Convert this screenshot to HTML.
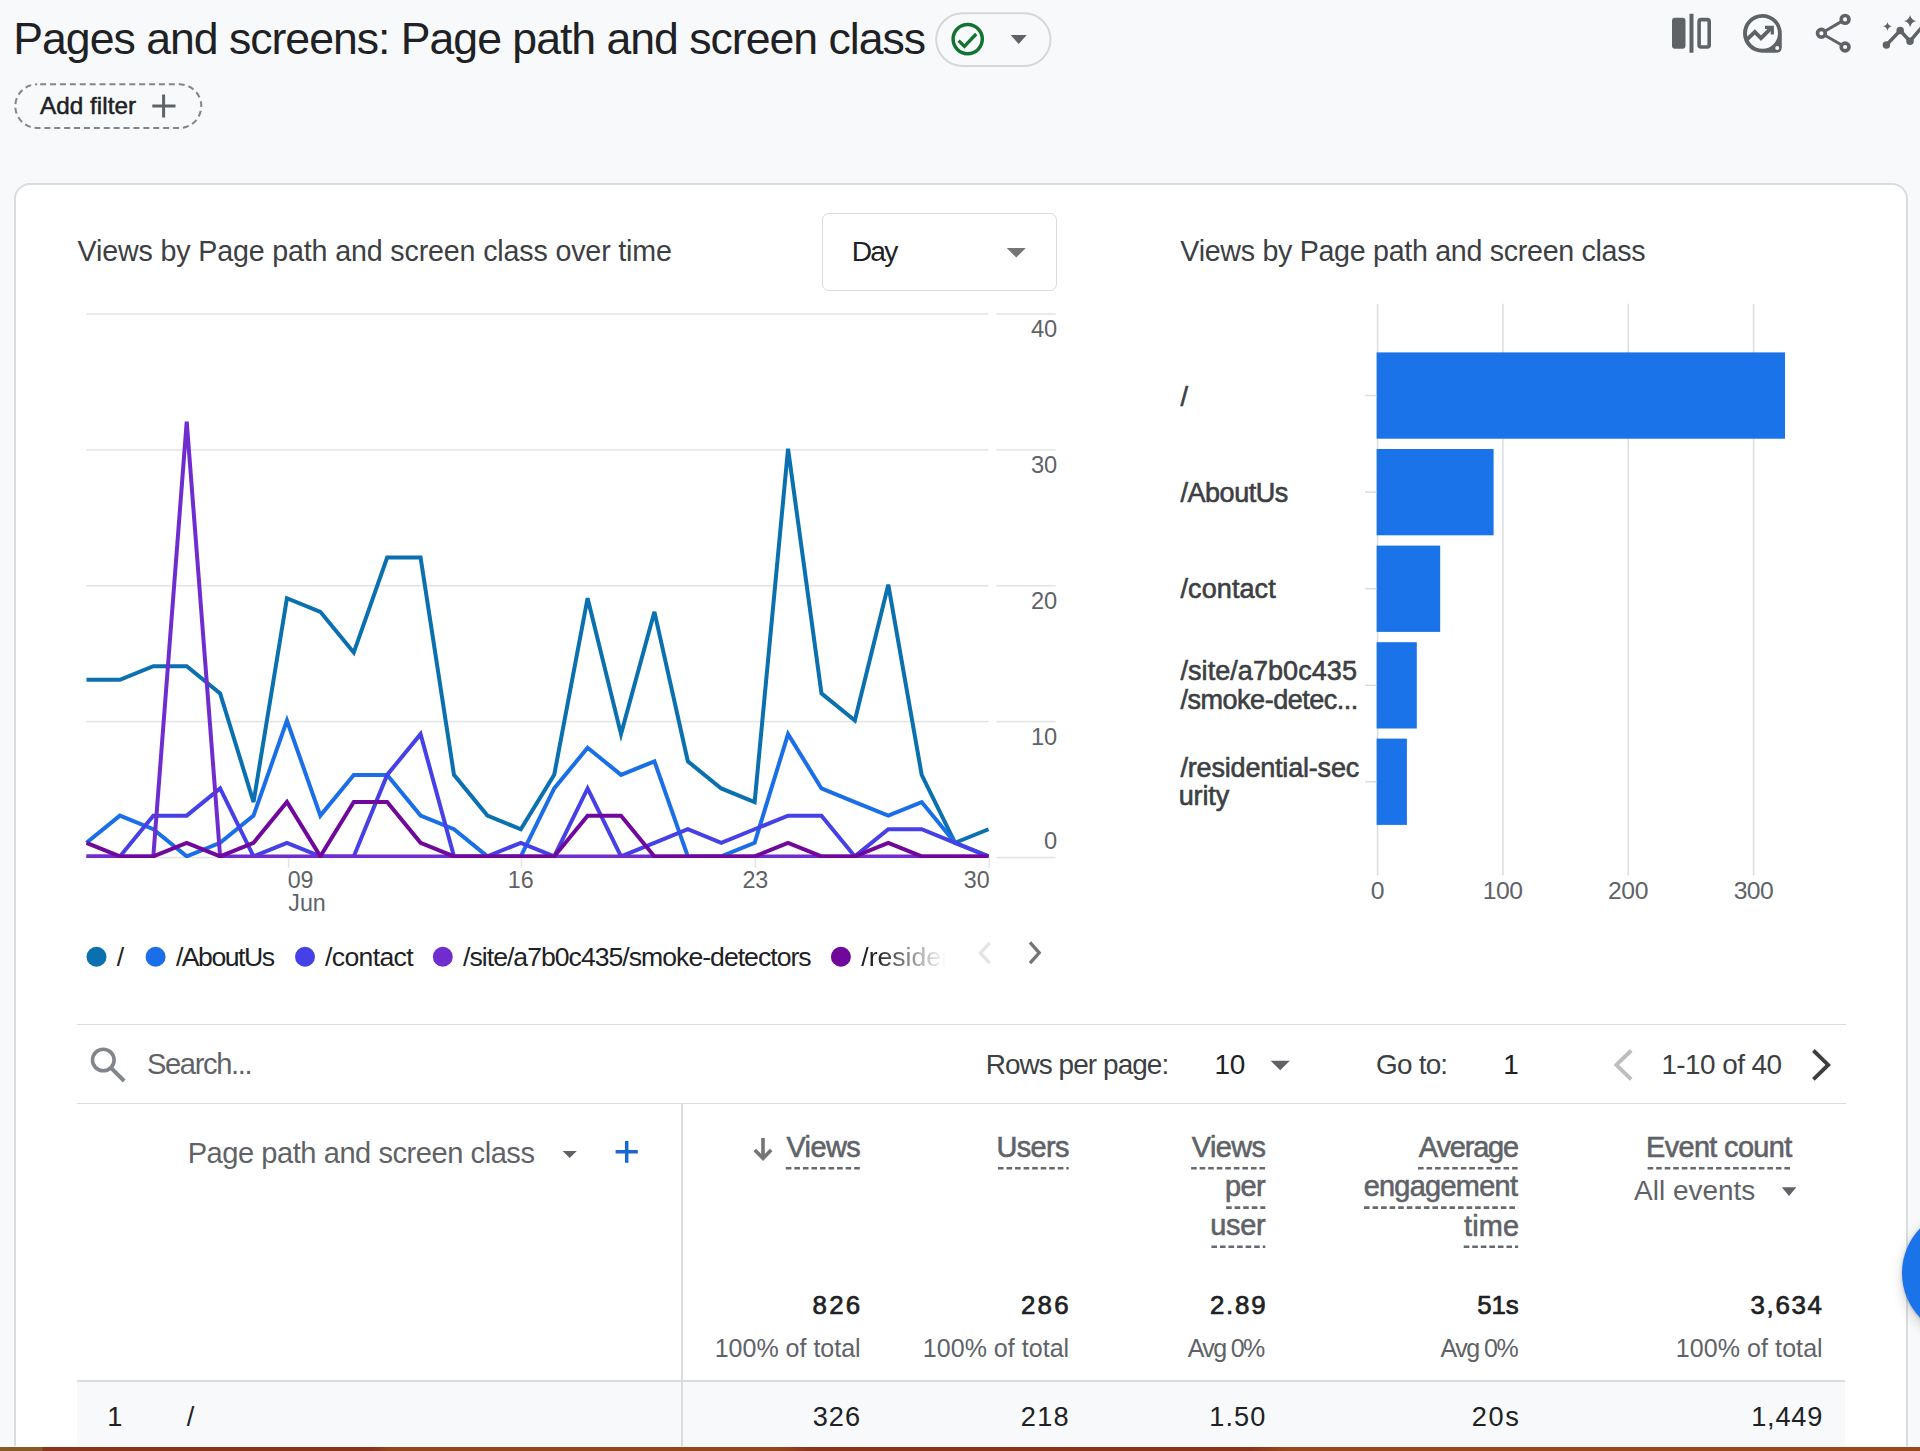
<!DOCTYPE html>
<html><head><meta charset="utf-8"><style>
html,body{margin:0;padding:0;}
body{width:1920px;height:1451px;background:#f8f9fa;position:relative;overflow:hidden;font-family:"Liberation Sans",sans-serif;}
.t{position:absolute;white-space:nowrap;}
</style></head><body>
<div class="t " style="top:14px;font-size:44.62px;line-height:49px;color:#202124;letter-spacing:-1.011px;left:13.33px;">Pages and screens: Page path and screen class</div>
<svg style="position:absolute;left:900px;top:0" width="200" height="80" viewBox="900 0 200 80"><rect x="936.2" y="13.3" width="114.3" height="52.6" rx="26.3" fill="none" stroke="#d5d7da" stroke-width="2"/></svg>
<svg style="position:absolute;left:0;top:0" width="1920" height="200"><circle cx="967.7" cy="39.1" r="14.6" fill="none" stroke="#137333" stroke-width="3.5"/><path d="M958.6 40.6 L964.4 46.4 L976.2 34" fill="none" stroke="#137333" stroke-width="3.3"/><path d="M1010.7 35 L1026.7 35 L1018.7 44 Z" fill="#5f6368"/><path d="M163.6 94.5 V117.5 M152.3 106 H175.5" stroke="#5f6368" stroke-width="3"/></svg>
<svg style="position:absolute;left:0;top:70px" width="230" height="70" viewBox="0 70 230 70"><rect x="15.3" y="84.3" width="186" height="43.7" rx="21.85" fill="none" stroke="#80868b" stroke-width="2" stroke-dasharray="6 3.9" stroke-dashoffset="-3"/></svg>
<div class="t " style="top:92px;font-size:24.27px;line-height:27px;color:#202124;-webkit-text-stroke:0.5px #202124;letter-spacing:0.034px;left:40.00px;">Add filter</div>
<svg style="position:absolute;left:1650px;top:0" width="270" height="70" viewBox="1650 0 270 70"><rect x="1672" y="17.8" width="13.5" height="31" rx="3" fill="#5f6368"/><rect x="1689.5" y="13.75" width="4" height="39" fill="#5f6368"/><rect x="1699.1" y="19.6" width="10.1" height="27.4" rx="2" fill="none" stroke="#5f6368" stroke-width="3.6"/><path d="M1781.8 33.3 V47 Q1781.8 52.8 1776 52.8 H1762.5 A19.4 19.4 0 1 1 1781.8 33.3 Z M1762.5 17.8 A15.5 15.5 0 1 0 1778 33.3 A15.5 15.5 0 0 0 1762.5 17.8 Z" fill="#5f6368" fill-rule="evenodd"/><circle cx="1777.2" cy="48" r="2" fill="#f8f9fa"/><path d="M1747.1 39.3 L1754.8 32 L1761 38.2 L1771.6 27.6" fill="none" stroke="#5f6368" stroke-width="3.8"/><path d="M1765 27.3 H1772.3 V34.5" fill="none" stroke="#5f6368" stroke-width="3.2"/><g fill="none" stroke="#5f6368" stroke-width="3.6"><circle cx="1845.1" cy="19.4" r="3.9"/><circle cx="1821.4" cy="33.3" r="3.9"/><circle cx="1845.1" cy="47" r="3.9"/></g><path d="M1824.8 31.3 L1841.7 21.4 M1824.8 35.3 L1841.7 45" stroke="#5f6368" stroke-width="3"/><path d="M1887.5 21.9 Q1888.29 25.51 1891.9 26.3 Q1888.29 27.09 1887.5 30.700000000000003 Q1886.71 27.09 1883.1 26.3 Q1886.71 25.51 1887.5 21.9Z" fill="#5f6368"/><path d="M1910.1 14.900000000000002 Q1911.22 19.98 1916.3 21.1 Q1911.22 22.22 1910.1 27.3 Q1908.98 22.22 1903.8999999999999 21.1 Q1908.98 19.98 1910.1 14.900000000000002Z" fill="#5f6368"/><path d="M1886.4 45 L1900.2 30.6 L1910 41.25 L1922 27" fill="none" stroke="#5f6368" stroke-width="3.5"/><circle cx="1886.4" cy="45" r="3.75" fill="#5f6368"/><circle cx="1900.2" cy="30.6" r="3.75" fill="#5f6368"/><circle cx="1910" cy="41.25" r="3.75" fill="#5f6368"/></svg>
<div style="position:absolute;left:13.5px;top:183.2px;width:1894px;height:1400px;background:#fff;border:2px solid #dadce0;border-radius:16px;box-sizing:border-box"></div>
<div class="t " style="top:235px;font-size:28.63px;line-height:32px;color:#3c4043;letter-spacing:-0.148px;left:77.56px;">Views by Page path and screen class over time</div>
<div class="t " style="top:235px;font-size:28.63px;line-height:32px;color:#3c4043;letter-spacing:-0.295px;left:1180.36px;">Views by Page path and screen class</div>
<div style="position:absolute;left:821.5px;top:212.5px;width:235px;height:78px;border:1.5px solid #dadce0;border-radius:7px;box-sizing:border-box"></div>
<div class="t " style="top:235px;font-size:28.20px;line-height:32px;color:#202124;letter-spacing:-1.818px;left:851.74px;">Day</div>
<svg style="position:absolute;left:0;top:0" width="1100" height="300"><path d="M1006.7 247.9 H1025.8 L1016.25 257.6Z" fill="#757575"/></svg>
<svg style="position:absolute;left:0;top:0" width="1100" height="1000"><defs><clipPath id="cc"><rect x="60" y="300" width="940" height="558"/></clipPath></defs><rect x="86.5" y="313.25" width="902" height="1.5" fill="#e3e3e3"/><rect x="996.4" y="313.25" width="59.2" height="1.5" fill="#e3e3e3"/><rect x="86.5" y="449.15" width="902" height="1.5" fill="#e3e3e3"/><rect x="996.4" y="449.15" width="59.2" height="1.5" fill="#e3e3e3"/><rect x="86.5" y="585.00" width="902" height="1.5" fill="#e3e3e3"/><rect x="996.4" y="585.00" width="59.2" height="1.5" fill="#e3e3e3"/><rect x="86.5" y="720.85" width="902" height="1.5" fill="#e3e3e3"/><rect x="996.4" y="720.85" width="59.2" height="1.5" fill="#e3e3e3"/><rect x="86.5" y="856.75" width="902" height="1.5" fill="#e3e3e3"/><rect x="996.4" y="856.75" width="59.2" height="1.5" fill="#e3e3e3"/><rect x="287.85" y="857.7" width="1.5" height="10" fill="#e3e3e3"/><rect x="520.75" y="857.7" width="1.5" height="10" fill="#e3e3e3"/><rect x="754.75" y="857.7" width="1.5" height="10" fill="#e3e3e3"/><rect x="988.55" y="857.7" width="1.5" height="10" fill="#e3e3e3"/><polyline points="86.50,679.76 119.91,679.76 153.31,666.17 186.72,666.17 220.13,693.35 253.54,802.05 286.94,598.24 320.35,611.82 353.76,652.59 387.17,557.47 420.57,557.47 453.98,774.88 487.39,815.64 520.80,829.23 554.20,774.88 587.61,598.24 621.02,734.11 654.43,611.82 687.83,761.29 721.24,788.46 754.65,802.05 788.06,448.77 821.46,693.35 854.87,720.52 888.28,584.65 921.69,774.88 955.09,842.81 988.50,829.23" fill="none" stroke="#0b70af" stroke-width="4" clip-path="url(#cc)"/><polyline points="86.50,842.81 119.91,815.64 153.31,829.23 186.72,856.40 220.13,842.81 253.54,815.64 286.94,720.52 320.35,815.64 353.76,774.88 387.17,774.88 420.57,815.64 453.98,829.23 487.39,856.40 520.80,856.40 554.20,788.46 587.61,747.70 621.02,774.88 654.43,761.29 687.83,856.40 721.24,856.40 754.65,842.81 788.06,734.11 821.46,788.46 854.87,802.05 888.28,815.64 921.69,802.05 955.09,842.81 988.50,856.40" fill="none" stroke="#1a6fe8" stroke-width="4" clip-path="url(#cc)"/><polyline points="86.50,856.40 119.91,856.40 153.31,815.64 186.72,815.64 220.13,788.46 253.54,856.40 286.94,842.81 320.35,856.40 353.76,856.40 387.17,774.88 420.57,734.11 453.98,856.40 487.39,856.40 520.80,842.81 554.20,856.40 587.61,788.46 621.02,856.40 654.43,842.81 687.83,829.23 721.24,842.81 754.65,829.23 788.06,815.64 821.46,815.64 854.87,856.40 888.28,829.23 921.69,829.23 955.09,842.81 988.50,856.40" fill="none" stroke="#4641e6" stroke-width="4" clip-path="url(#cc)"/><polyline points="86.50,856.40 119.91,856.40 153.31,856.40 186.72,421.60 220.13,856.40 253.54,856.40 286.94,856.40 320.35,856.40 353.76,856.40 387.17,856.40 420.57,856.40 453.98,856.40 487.39,856.40 520.80,856.40 554.20,856.40 587.61,856.40 621.02,856.40 654.43,856.40 687.83,856.40 721.24,856.40 754.65,856.40 788.06,856.40 821.46,856.40 854.87,856.40 888.28,856.40 921.69,856.40 955.09,856.40 988.50,856.40" fill="none" stroke="#6f2dcf" stroke-width="4" clip-path="url(#cc)"/><polyline points="86.50,842.81 119.91,856.40 153.31,856.40 186.72,842.81 220.13,856.40 253.54,842.81 286.94,802.05 320.35,856.40 353.76,802.05 387.17,802.05 420.57,842.81 453.98,856.40 487.39,856.40 520.80,856.40 554.20,856.40 587.61,815.64 621.02,815.64 654.43,856.40 687.83,856.40 721.24,856.40 754.65,856.40 788.06,842.81 821.46,856.40 854.87,856.40 888.28,842.81 921.69,856.40 955.09,856.40 988.50,856.40" fill="none" stroke="#70089c" stroke-width="4" clip-path="url(#cc)"/></svg>
<div class="t " style="top:316px;font-size:23.69px;line-height:26px;color:#5f6368;left:1030.93px;">40</div>
<div class="t " style="top:452px;font-size:23.69px;line-height:26px;color:#5f6368;left:1030.93px;">30</div>
<div class="t " style="top:588px;font-size:23.69px;line-height:26px;color:#5f6368;left:1030.93px;">20</div>
<div class="t " style="top:724px;font-size:23.69px;line-height:26px;color:#5f6368;left:1030.93px;">10</div>
<div class="t " style="top:828px;font-size:23.69px;line-height:26px;color:#5f6368;left:1044.08px;">0</div>
<div class="t " style="top:867px;font-size:23.26px;line-height:26px;color:#5f6368;left:287.67px;">09</div>
<div class="t " style="top:890px;font-size:23.26px;line-height:26px;color:#5f6368;left:288.25px;">Jun</div>
<div class="t " style="top:867px;font-size:23.26px;line-height:26px;color:#5f6368;left:507.86px;">16</div>
<div class="t " style="top:867px;font-size:23.26px;line-height:26px;color:#5f6368;left:742.44px;">23</div>
<div class="t " style="top:867px;font-size:23.26px;line-height:26px;color:#5f6368;left:963.80px;">30</div>
<svg style="position:absolute;left:0;top:900px" width="1100" height="100"><circle cx="96.5" cy="56.75" r="10" fill="#0b70af"/><circle cx="155.6" cy="56.75" r="10" fill="#1a6fe8"/><circle cx="305" cy="56.75" r="10" fill="#4641e6"/><circle cx="442.8" cy="56.75" r="10" fill="#6f2dcf"/><circle cx="840.9" cy="56.75" r="10" fill="#70089c"/><path d="M989.6 43 L980.4 53.1 L989.6 63.2" fill="none" stroke="#e3e3e3" stroke-width="3.3"/><path d="M1030 42.4 L1039.2 52.8 L1030 63.2" fill="none" stroke="#757575" stroke-width="3.3"/></svg>
<div class="t " style="top:942px;font-size:26.60px;line-height:30px;color:#202124;left:116.80px;">/</div>
<div class="t " style="top:942px;font-size:26.60px;line-height:30px;color:#202124;letter-spacing:-1.475px;left:175.90px;">/AboutUs</div>
<div class="t " style="top:942px;font-size:26.60px;line-height:30px;color:#202124;letter-spacing:-0.666px;left:325.10px;">/contact</div>
<div class="t " style="top:942px;font-size:26.60px;line-height:30px;color:#202124;letter-spacing:-0.980px;left:463.10px;">/site/a7b0c435/smoke-detectors</div>
<div class="t " style="top:942px;font-size:26.60px;line-height:30px;color:#202124;left:861.25px;-webkit-mask-image:linear-gradient(90deg,#000 0px,#000 15px,transparent 85px);width:90px;overflow:hidden;">/residential-security</div>
<svg style="position:absolute;left:1100px;top:280px" width="800" height="640" viewBox="1100 280 800 640"><rect x="1376.85" y="303.7" width="1.5" height="571.6" fill="#dadce0"/><rect x="1502.15" y="303.7" width="1.5" height="571.6" fill="#dadce0"/><rect x="1627.45" y="303.7" width="1.5" height="571.6" fill="#dadce0"/><rect x="1752.85" y="303.7" width="1.5" height="571.6" fill="#dadce0"/><rect x="1376.6" y="352.4" width="408.40" height="86.3" fill="#1a73e8"/><rect x="1365" y="394.80" width="11.5" height="1.5" fill="#dadce0"/><rect x="1376.6" y="449" width="117.00" height="86.3" fill="#1a73e8"/><rect x="1365" y="491.40" width="11.5" height="1.5" fill="#dadce0"/><rect x="1376.6" y="545.6" width="63.60" height="86.3" fill="#1a73e8"/><rect x="1365" y="588.00" width="11.5" height="1.5" fill="#dadce0"/><rect x="1376.6" y="642.2" width="40.20" height="86.3" fill="#1a73e8"/><rect x="1365" y="684.60" width="11.5" height="1.5" fill="#dadce0"/><rect x="1376.6" y="738.6" width="30.30" height="86.3" fill="#1a73e8"/><rect x="1365" y="781.00" width="11.5" height="1.5" fill="#dadce0"/></svg>
<div class="t " style="top:382px;font-size:27.04px;line-height:30px;color:#3c4043;-webkit-text-stroke:0.6px #3c4043;left:1180.50px;">/</div>
<div class="t " style="top:478px;font-size:27.04px;line-height:30px;color:#3c4043;-webkit-text-stroke:0.6px #3c4043;letter-spacing:-0.486px;left:1180.50px;">/AboutUs</div>
<div class="t " style="top:574px;font-size:27.04px;line-height:30px;color:#3c4043;-webkit-text-stroke:0.6px #3c4043;letter-spacing:0.073px;left:1180.50px;">/contact</div>
<div class="t " style="top:656px;font-size:27.04px;line-height:30px;color:#3c4043;-webkit-text-stroke:0.6px #3c4043;letter-spacing:0.047px;left:1180.50px;">/site/a7b0c435</div>
<div class="t " style="top:685px;font-size:27.04px;line-height:30px;color:#3c4043;-webkit-text-stroke:0.6px #3c4043;letter-spacing:-0.497px;left:1180.50px;">/smoke-detec...</div>
<div class="t " style="top:753px;font-size:27.04px;line-height:30px;color:#3c4043;-webkit-text-stroke:0.6px #3c4043;letter-spacing:-0.202px;left:1180.50px;">/residential-sec</div>
<div class="t " style="top:781px;font-size:27.04px;line-height:30px;color:#3c4043;-webkit-text-stroke:0.6px #3c4043;letter-spacing:-0.160px;left:1178.74px;">urity</div>
<div class="t " style="top:877px;font-size:24.71px;line-height:27px;color:#5f6368;left:1370.71px;">0</div>
<div class="t " style="top:877px;font-size:24.71px;line-height:27px;color:#5f6368;letter-spacing:-0.412px;left:1482.65px;">100</div>
<div class="t " style="top:877px;font-size:24.71px;line-height:27px;color:#5f6368;letter-spacing:-0.321px;left:1607.96px;">200</div>
<div class="t " style="top:877px;font-size:24.71px;line-height:27px;color:#5f6368;letter-spacing:-0.644px;left:1733.71px;">300</div>
<div style="position:absolute;left:76.6px;top:1023.5px;width:1769px;height:1.5px;background:#dadce0"></div>
<div style="position:absolute;left:76.6px;top:1102.6px;width:1769px;height:1.5px;background:#dadce0"></div>
<div style="position:absolute;left:681px;top:1104px;width:1.5px;height:360px;background:#dadce0"></div>
<svg style="position:absolute;left:0;top:1000px" width="1920" height="451" viewBox="0 1000 1920 451"><circle cx="103.3" cy="1060" r="10.8" fill="none" stroke="#80868b" stroke-width="3.6"/><path d="M111 1067.8 L124.2 1081" stroke="#80868b" stroke-width="4"/><path d="M562.6 1150.9 H576.8 L569.7 1158Z" fill="#5f6368"/><path d="M626.7 1140.9 V1162.8 M615.6 1151.8 H637.8" stroke="#1967d2" stroke-width="3.5"/><path d="M1270.6 1060.7 H1289.8 L1280.2 1070.3Z" fill="#5f6368"/><path d="M1631.2 1050.5 L1616.4 1064.9 L1631.2 1079.3" fill="none" stroke="#bdbdbd" stroke-width="3.9"/><path d="M1813.4 1050.5 L1828.2 1064.9 L1813.4 1079.3" fill="none" stroke="#3c4043" stroke-width="3.9"/><path d="M763 1138 V1157 M754.8 1149.9 L763 1158.3 L771.2 1149.9" fill="none" stroke="#757575" stroke-width="3.6"/><path d="M1781.8 1187.3 H1796.3 L1789.05 1196Z" fill="#5f6368"/></svg>
<div class="t " style="top:1048px;font-size:29.07px;line-height:32px;color:#5f6368;letter-spacing:-1.332px;left:146.99px;">Search...</div>
<div class="t " style="top:1049px;font-size:27.91px;line-height:31px;color:#3c4043;letter-spacing:-0.916px;left:985.67px;">Rows per page:</div>
<div class="t " style="top:1049px;font-size:27.91px;line-height:31px;color:#202124;letter-spacing:-0.107px;left:1214.41px;">10</div>
<div class="t " style="top:1049px;font-size:27.91px;line-height:31px;color:#3c4043;letter-spacing:-0.800px;left:1376.10px;">Go to:</div>
<div class="t " style="top:1049px;font-size:27.91px;line-height:31px;color:#202124;left:1503.31px;">1</div>
<div class="t " style="top:1049px;font-size:27.91px;line-height:31px;color:#3c4043;letter-spacing:-0.568px;left:1661.41px;">1-10 of 40</div>
<div class="t " style="top:1137px;font-size:29.07px;line-height:32px;color:#5f6368;letter-spacing:-0.455px;left:187.67px;">Page path and screen class</div>
<div class="t " style="top:1131px;font-size:28.92px;line-height:32px;color:#5f6368;-webkit-text-stroke:0.6px #5f6368;letter-spacing:-0.599px;left:786.46px;">Views</div>
<div class="t " style="top:1131px;font-size:28.92px;line-height:32px;color:#5f6368;-webkit-text-stroke:0.6px #5f6368;letter-spacing:-0.666px;left:996.58px;">Users</div>
<div class="t " style="top:1131px;font-size:28.92px;line-height:32px;color:#5f6368;-webkit-text-stroke:0.6px #5f6368;letter-spacing:-0.599px;left:1191.76px;">Views</div>
<div class="t " style="top:1170px;font-size:28.92px;line-height:32px;color:#5f6368;-webkit-text-stroke:0.6px #5f6368;letter-spacing:-0.619px;left:1225.02px;">per</div>
<div class="t " style="top:1209px;font-size:28.92px;line-height:32px;color:#5f6368;-webkit-text-stroke:0.6px #5f6368;letter-spacing:-0.333px;left:1210.32px;">user</div>
<div class="t " style="top:1131px;font-size:28.92px;line-height:32px;color:#5f6368;-webkit-text-stroke:0.6px #5f6368;letter-spacing:-1.144px;left:1418.80px;">Average</div>
<div class="t " style="top:1170px;font-size:28.92px;line-height:32px;color:#5f6368;-webkit-text-stroke:0.6px #5f6368;letter-spacing:-0.708px;left:1363.64px;">engagement</div>
<div class="t " style="top:1210px;font-size:28.92px;line-height:32px;color:#5f6368;-webkit-text-stroke:0.6px #5f6368;letter-spacing:0.122px;left:1464.07px;">time</div>
<div class="t " style="top:1131px;font-size:28.92px;line-height:32px;color:#5f6368;-webkit-text-stroke:0.6px #5f6368;letter-spacing:-0.656px;left:1646.09px;">Event count</div>
<div class="t " style="top:1175px;font-size:27.91px;line-height:31px;color:#5f6368;letter-spacing:0.033px;left:1634.00px;">All events</div>
<svg style="position:absolute;left:0;top:1100px" width="1920" height="200" viewBox="0 1100 1920 200"><line x1="785.80" y1="1168.2" x2="860.00" y2="1168.2" stroke="#66696e" stroke-width="2.6" stroke-dasharray="5.6 2.95"/><line x1="997.95" y1="1168.2" x2="1068.70" y2="1168.2" stroke="#66696e" stroke-width="2.6" stroke-dasharray="5.6 2.95"/><line x1="1191.10" y1="1168.2" x2="1265.30" y2="1168.2" stroke="#66696e" stroke-width="2.6" stroke-dasharray="5.6 2.95"/><line x1="1226.10" y1="1207.6" x2="1265.30" y2="1207.6" stroke="#66696e" stroke-width="2.6" stroke-dasharray="5.6 2.95"/><line x1="1211.40" y1="1246.8" x2="1265.30" y2="1246.8" stroke="#66696e" stroke-width="2.6" stroke-dasharray="5.6 2.95"/><line x1="1418.00" y1="1168.2" x2="1518.10" y2="1168.2" stroke="#66696e" stroke-width="2.6" stroke-dasharray="5.6 2.95"/><line x1="1364.00" y1="1207.6" x2="1518.10" y2="1207.6" stroke="#66696e" stroke-width="2.6" stroke-dasharray="5.6 2.95"/><line x1="1463.70" y1="1246.8" x2="1518.10" y2="1246.8" stroke="#66696e" stroke-width="2.6" stroke-dasharray="5.6 2.95"/><line x1="1647.60" y1="1168.2" x2="1792.40" y2="1168.2" stroke="#66696e" stroke-width="2.6" stroke-dasharray="5.6 2.95"/></svg>
<div class="t " style="top:1291px;font-size:25.87px;line-height:28px;color:#202124;-webkit-text-stroke:0.7px #202124;letter-spacing:2.186px;left:812.59px;">826</div>
<div class="t " style="top:1291px;font-size:25.87px;line-height:28px;color:#202124;-webkit-text-stroke:0.7px #202124;letter-spacing:2.275px;left:1020.91px;">286</div>
<div class="t " style="top:1291px;font-size:25.87px;line-height:28px;color:#202124;-webkit-text-stroke:0.7px #202124;letter-spacing:1.762px;left:1209.96px;">2.89</div>
<div class="t " style="top:1291px;font-size:25.87px;line-height:28px;color:#202124;-webkit-text-stroke:0.7px #202124;letter-spacing:-0.107px;left:1477.27px;">51s</div>
<div class="t " style="top:1291px;font-size:25.87px;line-height:28px;color:#202124;-webkit-text-stroke:0.7px #202124;letter-spacing:1.632px;left:1750.57px;">3,634</div>
<div class="t " style="top:1334px;font-size:25.00px;line-height:28px;color:#5f6368;letter-spacing:0.002px;left:714.72px;">100% of total</div>
<div class="t " style="top:1334px;font-size:25.00px;line-height:28px;color:#5f6368;letter-spacing:0.035px;left:922.82px;">100% of total</div>
<div class="t " style="top:1334px;font-size:25.00px;line-height:28px;color:#5f6368;letter-spacing:-1.655px;left:1187.80px;">Avg 0%</div>
<div class="t " style="top:1334px;font-size:25.00px;line-height:28px;color:#5f6368;letter-spacing:-1.515px;left:1440.50px;">Avg 0%</div>
<div class="t " style="top:1334px;font-size:25.00px;line-height:28px;color:#5f6368;letter-spacing:0.077px;left:1675.82px;">100% of total</div>
<div style="position:absolute;left:76.6px;top:1380.3px;width:1768px;height:1.5px;background:#dadce0"></div>
<div style="position:absolute;left:76.6px;top:1381.8px;width:1768px;height:66px;background:#f8f9fa"></div>
<div style="position:absolute;left:681px;top:1381.8px;width:1.5px;height:66px;background:#dadce0"></div>
<div class="t " style="top:1401px;font-size:27.18px;line-height:31px;color:#202124;left:107.36px;">1</div>
<div class="t " style="top:1401px;font-size:27.18px;line-height:31px;color:#202124;left:186.70px;">/</div>
<div class="t " style="top:1401px;font-size:27.18px;line-height:31px;color:#202124;letter-spacing:1.084px;left:812.66px;">326</div>
<div class="t " style="top:1401px;font-size:27.18px;line-height:31px;color:#202124;letter-spacing:1.245px;left:1020.84px;">218</div>
<div class="t " style="top:1401px;font-size:27.18px;line-height:31px;color:#202124;letter-spacing:1.091px;left:1209.21px;">1.50</div>
<div class="t " style="top:1401px;font-size:27.18px;line-height:31px;color:#202124;letter-spacing:1.675px;left:1471.64px;">20s</div>
<div class="t " style="top:1401px;font-size:27.18px;line-height:31px;color:#202124;letter-spacing:0.752px;left:1751.26px;">1,449</div>
<div style="position:absolute;left:1902.3px;top:1208.5px;width:128px;height:128px;border-radius:50%;background:#1a73e8;box-shadow:0 1px 3px rgba(60,64,67,.3),0 4px 10px 3px rgba(60,64,67,.15)"></div>
<div style="position:absolute;left:0;top:1446px;width:1920px;height:1px;background:rgba(255,255,255,.6)"></div>
<div style="position:absolute;left:0;top:1447px;width:1920px;height:4px;background:linear-gradient(90deg,#8a5a22 0px,#8a5a22 42px,#8c3416 43px,#8c3416 370px,#924818 390px,#924818 780px,#8e3416 810px,#8e3416 1250px,#9a4a1a 1290px,#9a4a1a 1920px)"></div>
</body></html>
